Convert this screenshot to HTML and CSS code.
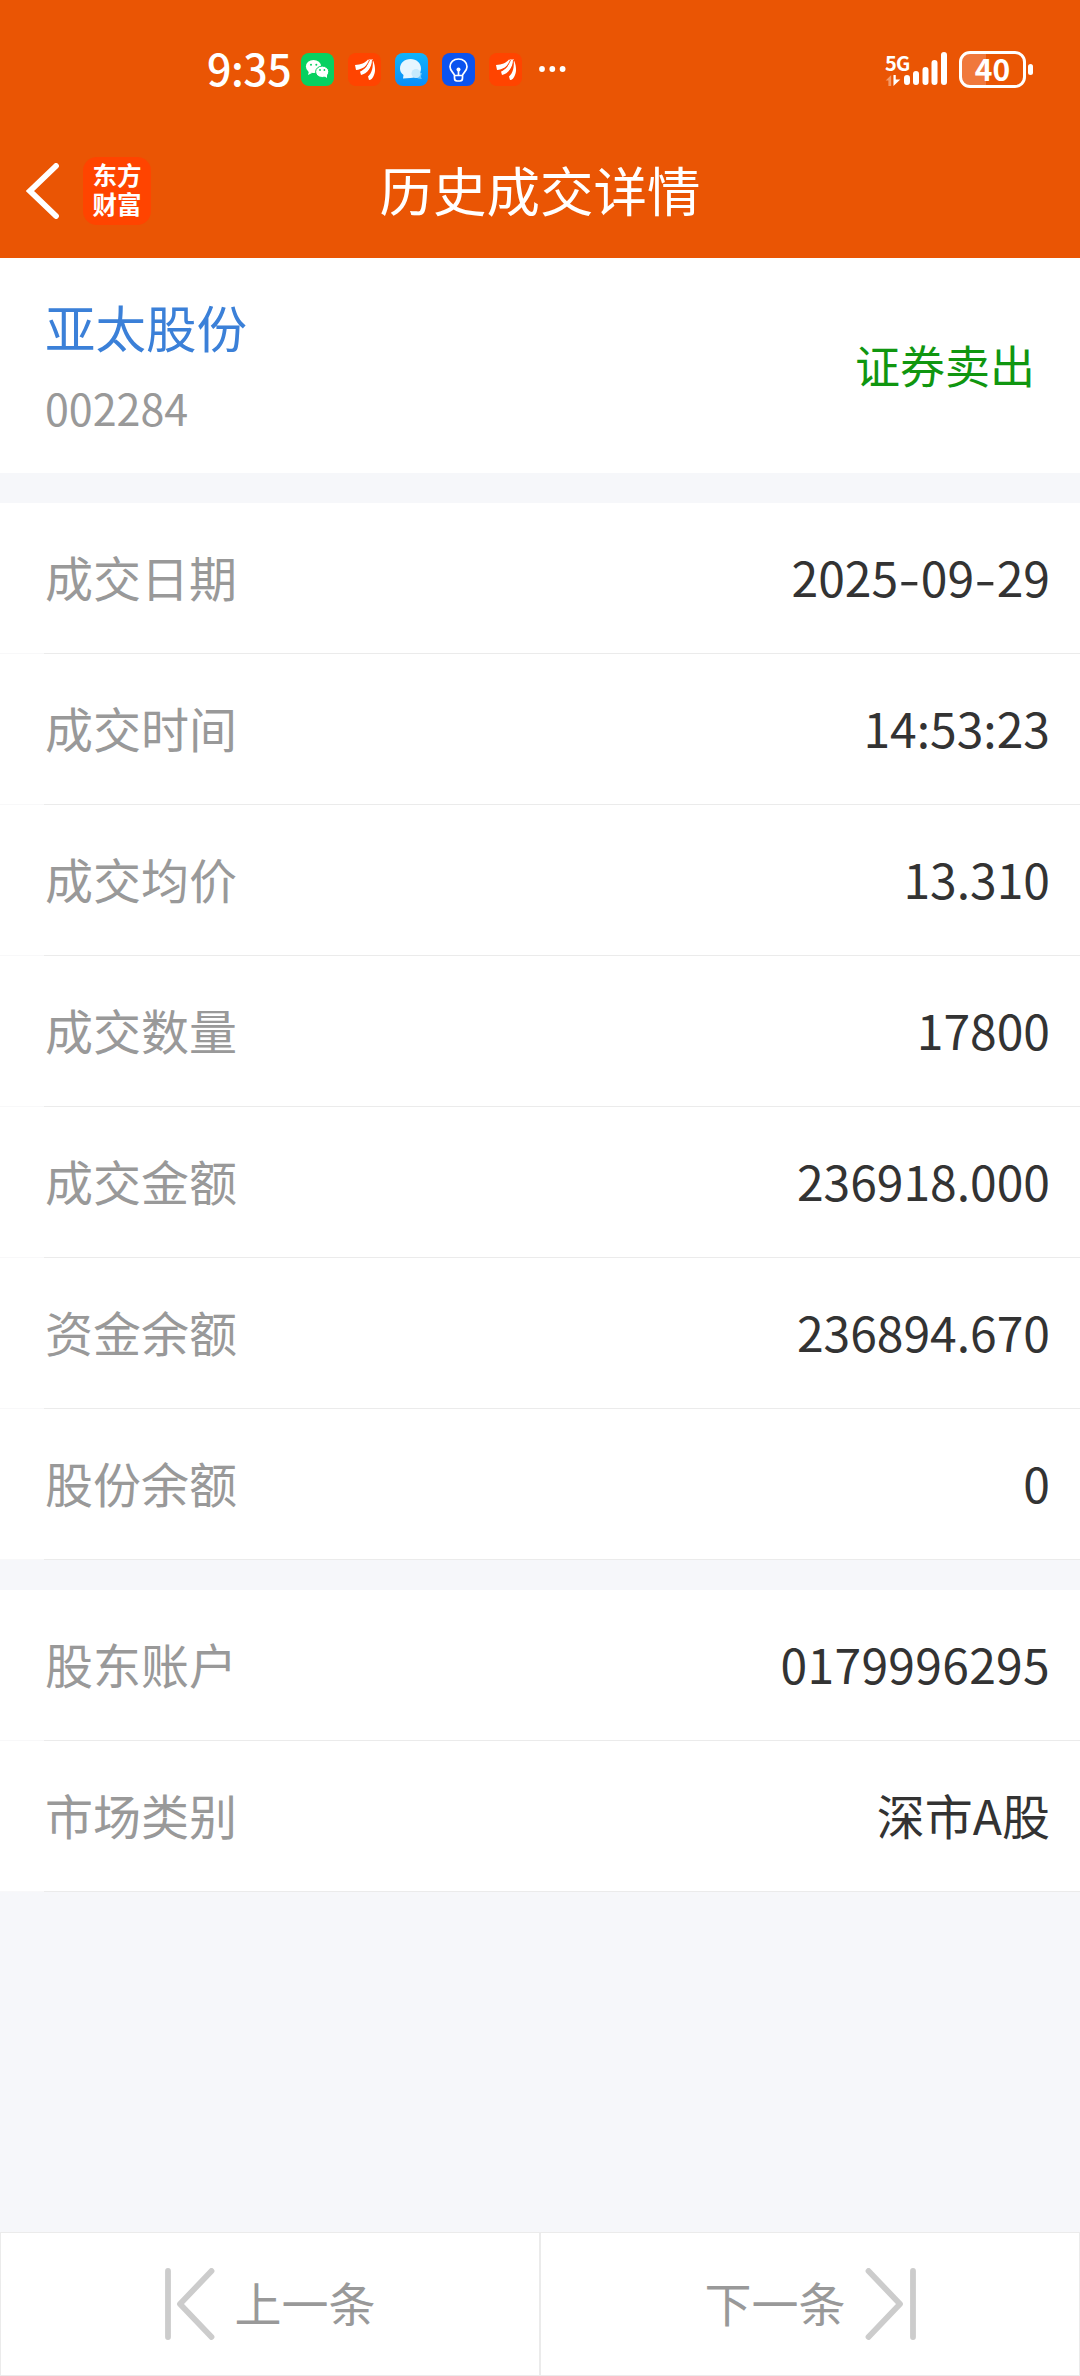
FILE: index.html
```html
<!DOCTYPE html>
<html lang="zh-CN">
<head>
  <meta charset="UTF-8">
  <meta name="viewport" content="width=device-width, initial-scale=1.0">
  <title>历史成交详情</title>
  <link rel="stylesheet" href="styles.css">
</head>
<body>

  <div class="page">
    <!-- Header -->
    <header class="header">
      <div class="status-bar">
        <div class="status-left">
          <span class="time">9:35</span>
          <svg class="app-icon" viewBox="0 0 33 33">
            <rect width="33" height="33" rx="8" fill="#07d160"/>
            <ellipse cx="12.5" cy="13.5" rx="7.6" ry="6.6" fill="#fff"/>
            <path d="M8 18l-1 4 4-2z" fill="#fff"/>
            <ellipse cx="21.2" cy="18.8" rx="6.6" ry="5.7" fill="#fff" stroke="#07d160" stroke-width="1"/>
            <path d="M23 23l3 2 0-4z" fill="#fff"/>
            <circle cx="10" cy="11.8" r="1" fill="#07d160"/>
            <circle cx="15.3" cy="11.8" r="1" fill="#07d160"/>
            <circle cx="19" cy="17" r=".9" fill="#07d160"/>
            <circle cx="23.4" cy="17" r=".9" fill="#07d160"/>
          </svg>
          <svg class="app-icon" viewBox="0 0 33 33">
            <rect width="33" height="33" rx="8" fill="#ff4400"/>
            <path d="M7 12C13 11.500 17 10 20 6.500L22 7.500C19 13 14 16.500 8 17Z" fill="#fff"/>
            <path d="M21 6.500L25 6.500C24 14 19 21 13 22L12 18.500C18 16 20 12 21 6.500Z" fill="#fff"/>
            <path d="M24.500 6.500C27 11 28 18 26 22C25 25 23 27 21 27L20 23.500C24 20 25.500 14 24.500 6.500Z" fill="#fff"/>
            <path d="M21.500 7C19 13 16 15.500 12 18M24.500 7C24 14 21 19 17 22.500" fill="none" stroke="#ff4400" stroke-width=".9"/>
          </svg>
          <svg class="app-icon" viewBox="0 0 33 33">
            <defs>
              <linearGradient id="sky" x1="0" y1="0" x2="0" y2="1">
                <stop offset="0" stop-color="#10b4fb"/>
                <stop offset="1" stop-color="#0a8df8"/>
              </linearGradient>
            </defs>
            <rect width="33" height="33" rx="8" fill="url(#sky)"/>
            <path d="M21 21L27 20Q25 24 27 26Q23 26 20 24Z" fill="#6cc8fc"/>
            <path d="M15.500 6C21.500 6 26 10 26 15.500C26 21 21.500 25 15.500 25L8 25.500L8.500 22C6 20 5 18 5 15.500C5 10 9.500 6 15.500 6Z" fill="#e6f6ff"/>
            <circle cx="21" cy="20.500" r="4.500" fill="#c4eafd"/>
          </svg>
          <svg class="app-icon" viewBox="0 0 33 33">
            <rect width="33" height="33" rx="8" fill="#0b53ef"/>
            <g fill="none" stroke="#fff" stroke-width="1.700" stroke-linecap="round" stroke-linejoin="round">
              <path d="M12.500 22.500C12.500 20 8 18.500 8 13.700C8 9 11.700 6 16.500 6S25 9 25 13.700C25 18.500 20.500 20 20.500 22.500Z"/>
              <path d="M12.500 23V25Q12.500 28 15 28H18Q20.500 28 20.500 25V23M16.500 17V22"/>
            </g>
            <circle cx="16.500" cy="16.500" r="2" fill="#fff"/>
          </svg>
          <svg class="app-icon" viewBox="0 0 33 33">
            <rect width="33" height="33" rx="8" fill="#ff4400"/>
            <path d="M7 12C13 11.500 17 10 20 6.500L22 7.500C19 13 14 16.500 8 17Z" fill="#fff"/>
            <path d="M21 6.500L25 6.500C24 14 19 21 13 22L12 18.500C18 16 20 12 21 6.500Z" fill="#fff"/>
            <path d="M24.500 6.500C27 11 28 18 26 22C25 25 23 27 21 27L20 23.500C24 20 25.500 14 24.500 6.500Z" fill="#fff"/>
            <path d="M21.500 7C19 13 16 15.500 12 18M24.500 7C24 14 21 19 17 22.500" fill="none" stroke="#ff4400" stroke-width=".9"/>
          </svg>
          <svg class="more" viewBox="0 0 28 8" fill="#fff">
            <circle cx="4" cy="4" r="2.900"/>
            <circle cx="14.300" cy="4" r="2.900"/>
            <circle cx="24.600" cy="4" r="2.900"/>
          </svg>
        </div>
        <div class="status-right">
          <div class="signal">
            <div class="net">
              <span class="net-name">5G</span>
              <svg class="net-arrows" viewBox="0 0 16 12">
                <path d="M0 6L6 0V12H3V6Z" fill="#fff" opacity=".4"/>
                <path d="M8.500 0H11V5H16L8.500 12Z" fill="#fff"/>
              </svg>
            </div>
            <svg class="bars" viewBox="0 0 44 36">
              <path d="M3 27V31M12 23V31M21.500 19V31M30.500 12V31M40 4V31" stroke="#fff" stroke-width="6" stroke-linecap="round"/>
            </svg>
          </div>
          <div class="battery">
            <span class="level">40</span>
          </div>
          <span class="battery-tip"></span>
        </div>
      </div>

      <div class="nav-bar">
        <div class="nav-left">
          <svg class="back" viewBox="0 0 34 56">
            <path d="M30 3L4 28L30 53" fill="none" stroke="#fff" stroke-width="5.800" stroke-linecap="round" stroke-linejoin="miter"/>
          </svg>
          <div class="logo"><span>东方</span><span>财富</span></div>
        </div>
        <h1 class="title">历史成交详情</h1>
      </div>
    </header>

    <!-- Stock -->
    <section class="stock">
      <div>
        <div class="stock-name">亚太股份</div>
        <div class="stock-code">002284</div>
      </div>
      <div class="stock-type">证券卖出</div>
    </section>

    <!-- Trade details -->
    <section class="list">
      <div class="row"><span class="label">成交日期</span><span class="value">2025<i class="dash">-</i>09<i class="dash">-</i>29</span></div>
      <div class="row"><span class="label">成交时间</span><span class="value">14:53:23</span></div>
      <div class="row"><span class="label">成交均价</span><span class="value">13.310</span></div>
      <div class="row"><span class="label">成交数量</span><span class="value">17800</span></div>
      <div class="row"><span class="label">成交金额</span><span class="value">236918.000</span></div>
      <div class="row"><span class="label">资金余额</span><span class="value">236894.670</span></div>
      <div class="row"><span class="label">股份余额</span><span class="value">0</span></div>
    </section>

    <!-- Account -->
    <section class="list">
      <div class="row"><span class="label">股东账户</span><span class="value account">0179996295</span></div>
      <div class="row"><span class="label">市场类别</span><span class="value">深市A股</span></div>
    </section>

    <!-- Prev / next -->
    <footer class="pager">
      <button class="pager-btn">
        <svg class="pager-icon" viewBox="0 0 52 72">
          <path d="M3 3V69M46.500 3L15 36L46.500 69" fill="none" stroke="#ccc" stroke-width="5.800" stroke-linecap="round" stroke-linejoin="round"/>
        </svg>
        <span class="pager-text">上一条</span>
      </button>
      <button class="pager-btn">
        <span class="pager-text">下一条</span>
        <svg class="pager-icon" viewBox="0 0 52 72">
          <path d="M49 3V69M4.500 3L36 36L4.500 69" fill="none" stroke="#ccc" stroke-width="5.800" stroke-linecap="round" stroke-linejoin="round"/>
        </svg>
      </button>
    </footer>
  </div>

</body>
</html>
```

FILE: styles.css
```css
* {
  box-sizing: border-box;
}
body {
  margin: 0;
  font-family: "Noto Sans CJK SC", sans-serif;
  background: #f6f7fa;
  color: #333;
}
.page {
  display: flex;
  flex-direction: column;
  width: 1080px;
  height: 2376px;
}
svg {
  display: block;
  flex: none;
}

/* Header */
.header {
  height: 258px;
  background: #ea5504;
  color: #fff;
}
.status-bar {
  display: flex;
  justify-content: space-between;
  align-items: center;
  height: 124px;
  padding: 14px 47px 0 207px;
}
.status-left, .status-right {
  display: flex;
  align-items: center;
}
.status-left {
  gap: 14px;
}
.time {
  width: 80px;
  padding-bottom: 4px;
  font-size: 43px;
  font-weight: 500;
  line-height: 60px;
  letter-spacing: -0.5px;
}
.app-icon {
  width: 33px;
  height: 33px;
}
.more {
  width: 28px;
  height: 8px;
  margin-left: 2px;
}
.signal {
  display: flex;
  align-items: flex-end;
  height: 36px;
  margin-right: 11px;
}
.net {
  width: 19px;
  padding-bottom: 1px;
}
.net-name {
  display: block;
  width: 26px;
  font-size: 20px;
  font-weight: 700;
  line-height: 24px;
  letter-spacing: -0.8px;
}
.net-arrows {
  width: 16px;
  height: 11px;
}
.bars {
  width: 44px;
  height: 36px;
}
.battery {
  width: 67px;
  height: 37px;
  border: 3px solid #fff;
  border-radius: 11px;
  background: linear-gradient(to right, #f0783c 40%, #ea5504 40%);
}
.level {
  display: block;
  font-size: 30px;
  font-weight: 700;
  line-height: 29px;
  text-align: center;
}
.battery-tip {
  width: 5px;
  height: 11px;
  margin-left: 2px;
  border-radius: 3px;
  background: #fff;
}
.nav-bar {
  display: grid;
  grid-template-columns: 1fr auto 1fr;
  align-items: center;
  height: 134px;
}
.nav-left {
  display: flex;
  align-items: center;
  gap: 23px;
  padding-left: 26px;
}
.back {
  width: 34px;
  height: 56px;
}
.logo {
  display: flex;
  flex-direction: column;
  align-items: center;
  width: 68px;
  height: 68px;
  padding-top: 3px;
  border-radius: 14px;
  background: #ff4400;
  font-size: 24.5px;
  font-weight: 700;
  line-height: 29px;
}
.title {
  margin: 0;
  padding-bottom: 4px;
  font-size: 53.5px;
  font-weight: 400;
  line-height: 80px;
}

/* Stock */
.stock {
  display: flex;
  justify-content: space-between;
  align-items: center;
  height: 215px;
  padding: 0 45px;
  background: #fff;
}
.stock-name {
  font-size: 50.5px;
  line-height: 80px;
  color: #3b80d8;
}
.stock-code {
  padding-top: 2px;
  font-size: 43px;
  line-height: 78px;
  color: #999;
}
.stock-type {
  padding-bottom: 3px;
  font-size: 45px;
  color: #109610;
}

/* Detail rows */
.list {
  margin-top: 30px;
  background: #fff;
}
.row {
  display: flex;
  justify-content: space-between;
  align-items: center;
  height: 151px;
  padding: 0 30px 5px 45px;
  border-bottom: 1px solid #ebebeb;
  border-image: linear-gradient(to right, #f8f8f9 45px, #ebebeb 45px) 1;
  font-size: 48px;
}
.label {
  color: #999;
}
.value {
  color: #333;
}
.account {
  letter-spacing: 0.3px;
}
.dash {
  display: inline-block;
  font-style: normal;
  transform: scaleX(1.3);
  margin: 0 3px;
}

/* Prev / next */
.pager {
  display: flex;
  height: 144px;
  margin-top: auto;
}
.pager-btn {
  display: flex;
  flex: 1;
  justify-content: center;
  align-items: center;
  gap: 18px;
  padding: 0;
  border: 1px solid #ebebeb;
  background: #fff;
  color: #999;
  font-family: inherit;
  font-size: 47px;
}
.pager-text {
  padding-bottom: 5px;
}
.pager-icon {
  width: 52px;
  height: 72px;
}
```
